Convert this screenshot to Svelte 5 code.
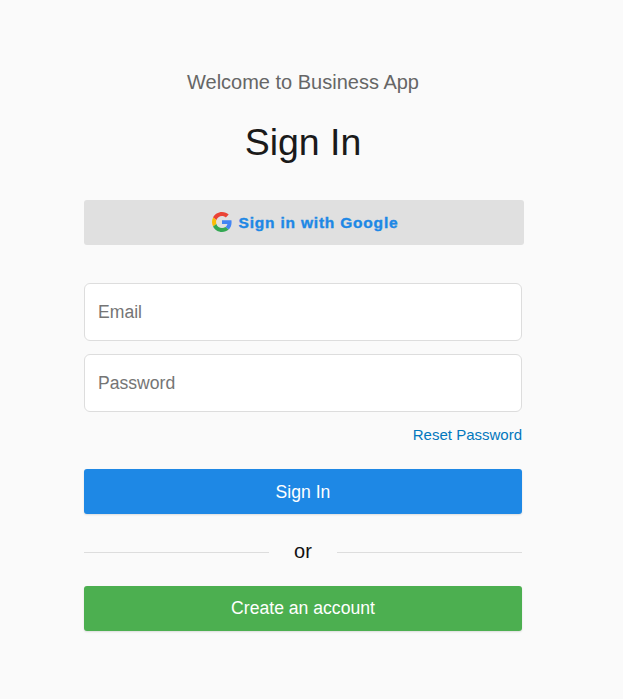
<script>
  let email = $state("");
  let password = $state("");
</script>

<main class="page">
  <p class="welcome">Welcome to Business App</p>
  <h1>Sign In</h1>

  <button class="google" type="button">
    <svg viewBox="0 0 48 48" width="20" height="20" aria-hidden="true">
      <path fill="#EA4335" d="M24 9.5c3.54 0 6.71 1.22 9.21 3.6l6.85-6.85C35.9 2.38 30.47 0 24 0 14.62 0 6.51 5.38 2.56 13.22l7.98 6.19C12.43 13.72 17.74 9.5 24 9.5z" />
      <path fill="#4285F4" d="M46.98 24.55c0-1.57-.15-3.09-.38-4.55H24v9.02h12.94c-.58 2.96-2.26 5.48-4.78 7.18l7.73 6c4.51-4.18 7.09-10.36 7.09-17.65z" />
      <path fill="#FBBC05" d="M10.53 28.59c-.48-1.45-.76-2.99-.76-4.59s.27-3.14.76-4.59l-7.98-6.19C.92 16.46 0 20.12 0 24c0 3.88.92 7.54 2.56 10.78l7.97-6.19z" />
      <path fill="#34A853" d="M24 48c6.48 0 11.93-2.13 15.89-5.81l-7.73-6c-2.15 1.45-4.92 2.3-8.16 2.3-6.26 0-11.57-4.22-13.47-9.91l-7.98 6.19C6.51 42.62 14.62 48 24 48z" />
    </svg>
    <span>Sign in with Google</span>
  </button>

  <form class="form" onsubmit={(e) => e.preventDefault()}>
    <input type="email" placeholder="Email" bind:value={email} />
    <input type="password" placeholder="Password" bind:value={password} />
    <a class="reset" href="#reset">Reset Password</a>
    <button class="action blue" type="submit">Sign In</button>
    <div class="divider"><span>or</span></div>
    <button class="action green" type="button">Create an account</button>
  </form>
</main>

<style>
  :global(body) {
    background: #fafafa;
    font-family: "Liberation Sans", Arial, sans-serif;
  }
  .page {
    width: 438px;
    padding: 71px 0 68px 84px;
    display: flex;
    flex-direction: column;
  }
  .welcome {
    margin: 0;
    font-size: 20px;
    line-height: 23px;
    text-align: center;
    color: #666;
  }
  h1 {
    margin: 26px 0 0;
    font-size: 37.5px;
    line-height: 44px;
    font-weight: 400;
    text-align: center;
    color: #1a1a1a;
  }
  .google {
    width: 440px;
    height: 45px;
    margin-top: 36px;
    padding: 1px 0 0 2px;
    border: 0;
    border-radius: 3px;
    background: #e0e0e0;
    color: #1e88e5;
    display: flex;
    align-items: center;
    justify-content: center;
    gap: 7px;
    font-family: inherit;
    font-size: 15.5px;
    font-weight: 700;
    letter-spacing: 0.8px;
    -webkit-text-stroke: 0.4px #1e88e5;
  }
  .google svg {
    margin-top: -2px;
  }
  .form {
    margin-top: 38px;
    display: flex;
    flex-direction: column;
  }
  input {
    box-sizing: border-box;
    width: 100%;
    height: 58px;
    padding: 0 13px;
    border: 1px solid #ddd;
    border-radius: 6px;
    background: #fff;
    font-family: inherit;
    font-size: 17.6px;
    color: #333;
    outline: none;
  }
  input + input {
    margin-top: 13px;
  }
  input::placeholder {
    color: #757575;
    opacity: 1;
  }
  .reset {
    align-self: flex-end;
    margin-top: 14px;
    font-size: 15px;
    line-height: 17px;
    color: #0277bd;
    text-decoration: none;
  }
  .action {
    height: 45px;
    border: 0;
    border-radius: 3px;
    color: #fff;
    font-family: inherit;
    font-size: 17.6px;
    box-shadow: 0 1px 2px rgba(0, 0, 0, 0.12);
  }
  .blue {
    margin-top: 26px;
    padding-top: 3px;
    background: #1e88e5;
  }
  .green {
    background: #4caf50;
  }
  .divider {
    box-sizing: border-box;
    height: 72px;
    padding-top: 4px;
    display: flex;
    align-items: center;
    gap: 25px;
    font-size: 20px;
    color: #111;
  }
  .divider span {
    margin-top: -2px;
  }
  .divider::before,
  .divider::after {
    content: "";
    flex: 1;
    height: 1px;
    background: #ddd;
  }
</style>
